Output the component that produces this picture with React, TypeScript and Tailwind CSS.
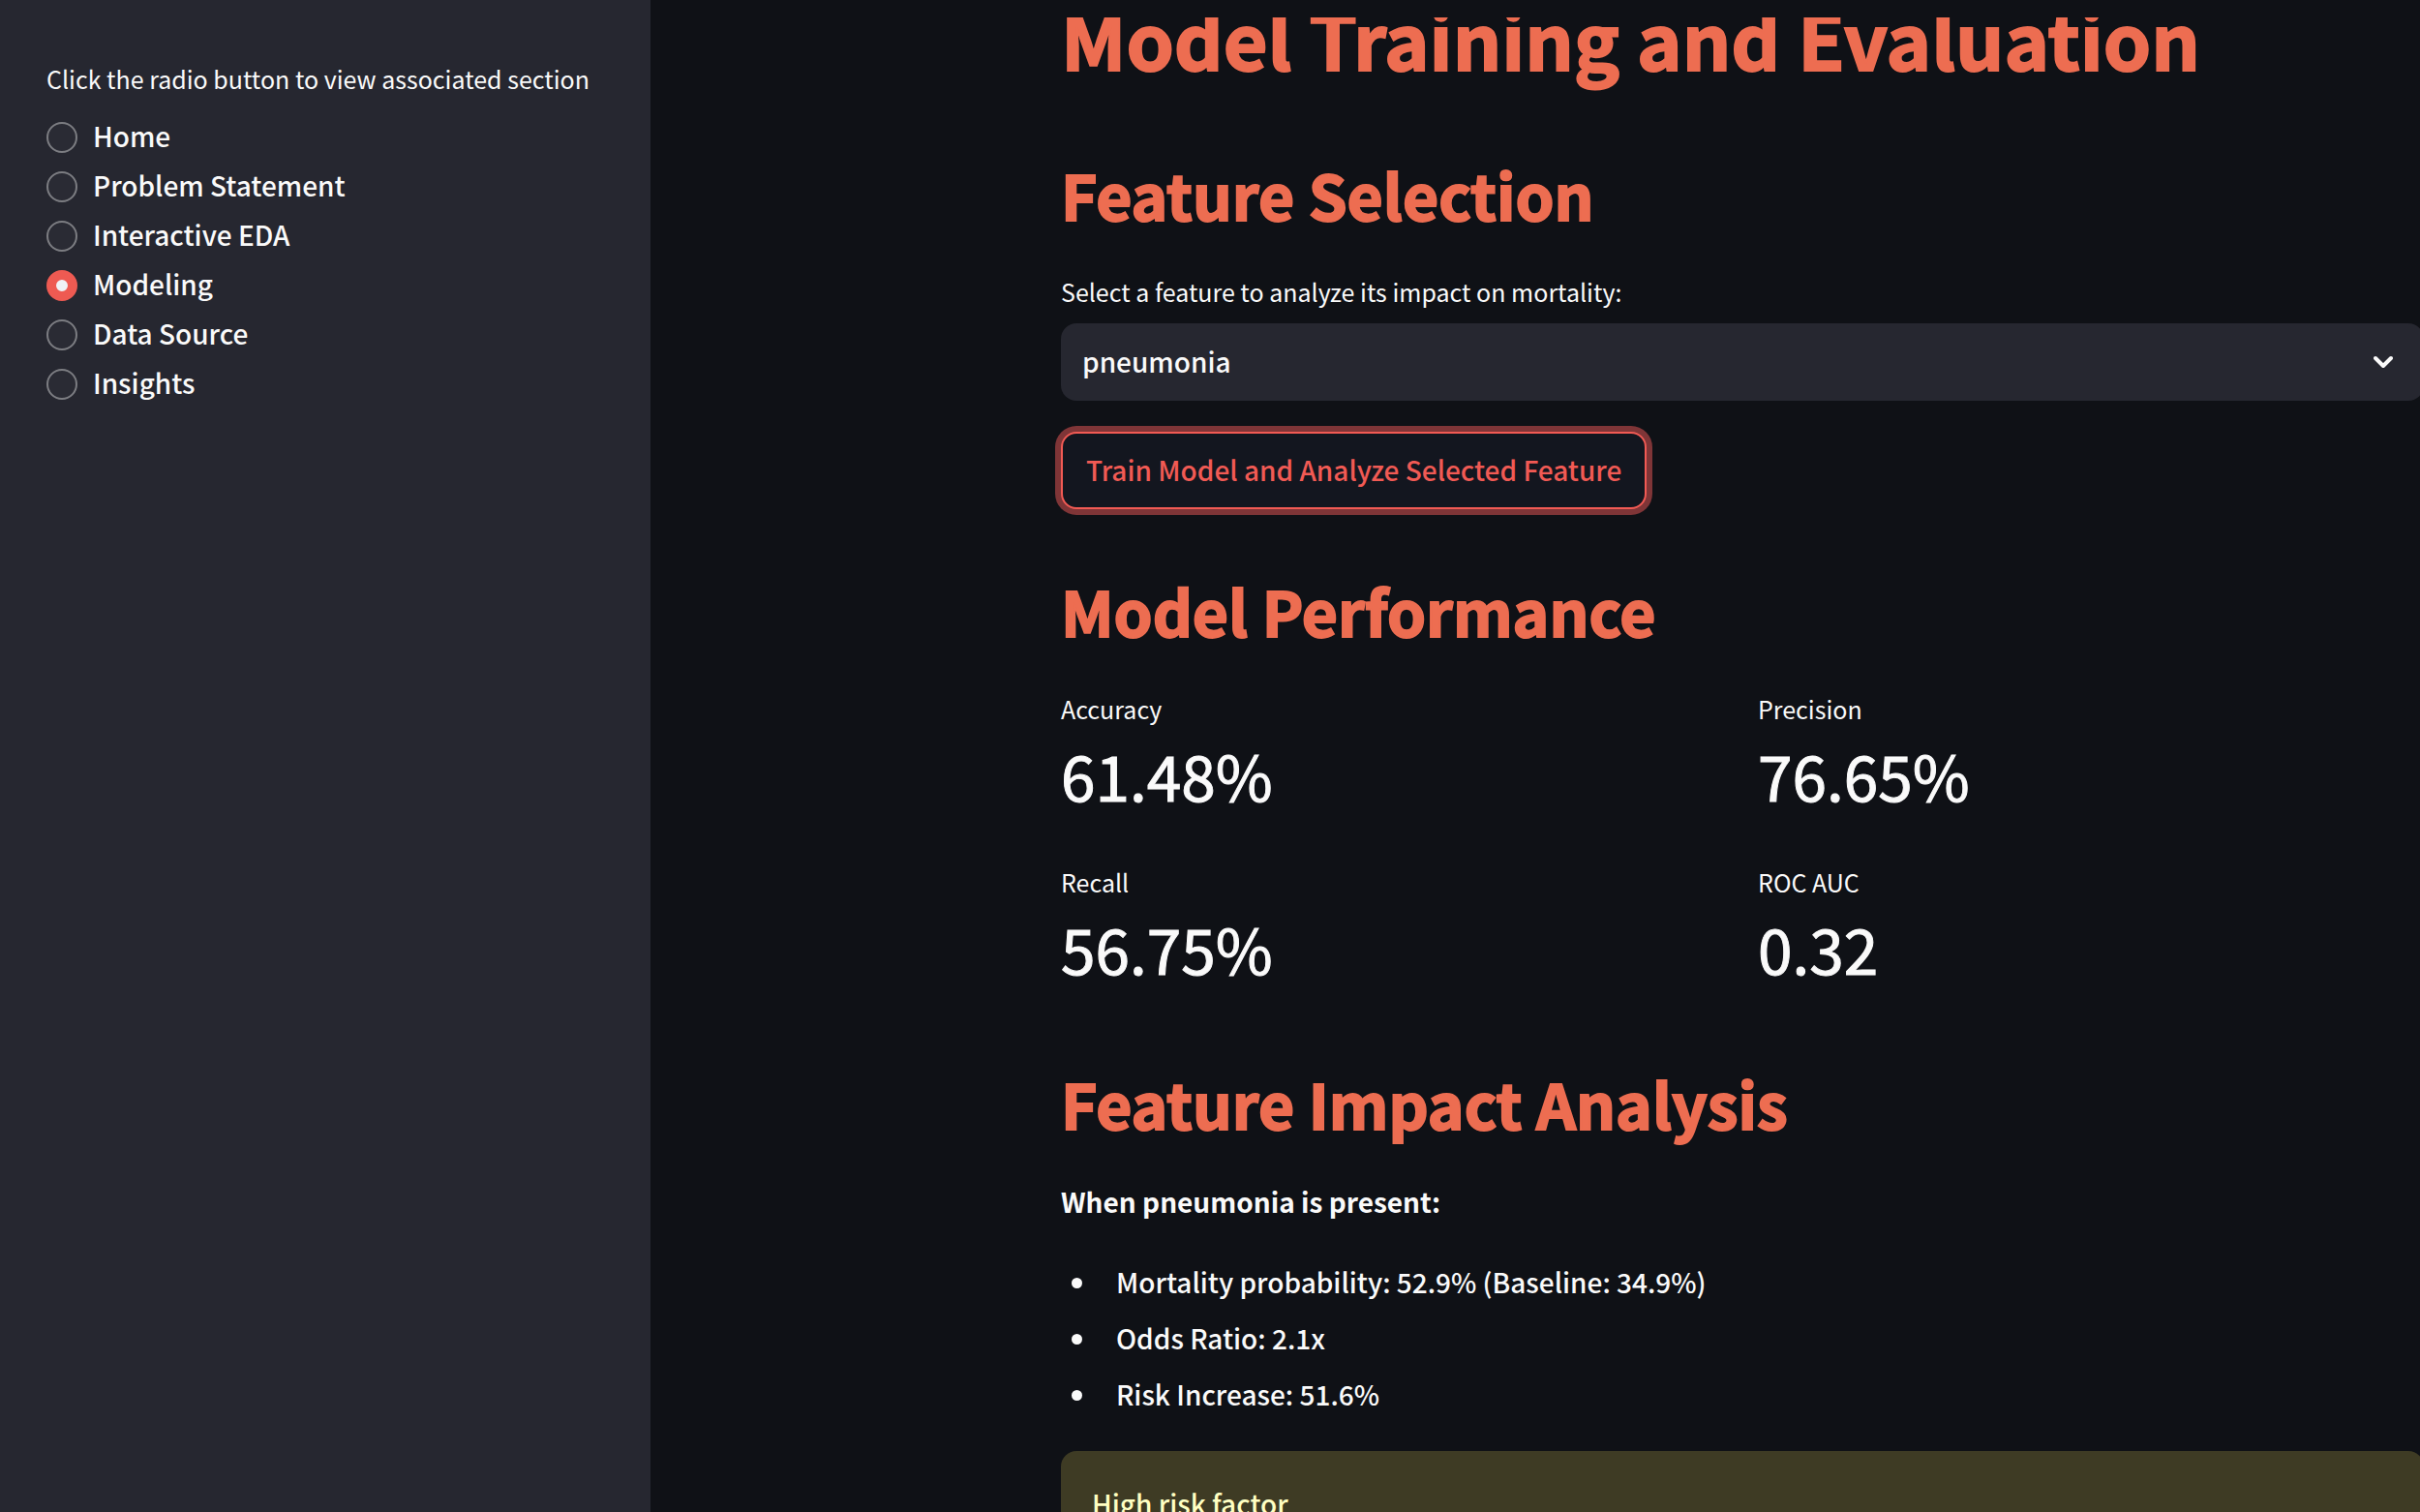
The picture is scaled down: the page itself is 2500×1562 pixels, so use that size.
import { useState } from "react";

const sections = [
  "Home",
  "Problem Statement",
  "Interactive EDA",
  "Modeling",
  "Data Source",
  "Insights",
];

const metrics = [
  { label: "Accuracy", value: "61.48%" },
  { label: "Precision", value: "76.65%" },
  { label: "Recall", value: "56.75%" },
  { label: "ROC AUC", value: "0.32" },
];

const findings = [
  "Mortality probability: 52.9% (Baseline: 34.9%)",
  "Odds Ratio: 2.1x",
  "Risk Increase: 51.6%",
];

function Sidebar() {
  const [active, setActive] = useState("Modeling");
  return (
    <aside className="w-[672px] shrink-0 bg-[#262730] px-12 pt-[61px]">
      <fieldset>
        <legend className="text-[25px] leading-[40px] font-normal">
          Click the radio button to view associated section
        </legend>
        <div className="mt-[25px] flex flex-col gap-[19px]">
          {sections.map((name) => (
            <label key={name} className="flex h-8 cursor-pointer items-center gap-4">
              <input
                type="radio"
                name="section"
                value={name}
                checked={active === name}
                onChange={() => setActive(name)}
                className="size-8 shrink-0 appearance-none rounded-full border-2 border-[#7c7d82] bg-[#2a2b34] outline-none checked:border-[10px] checked:border-[#ee5a52] checked:bg-[#f0f2f6]"
              />
              <span className="pb-1 text-[28px] leading-[46px]">{name}</span>
            </label>
          ))}
        </div>
      </fieldset>
    </aside>
  );
}

function SectionHeading({ children }: { children: string }) {
  return (
    <h2 className="text-[64px] leading-[86px] font-bold text-[#ed6d51] [-webkit-text-stroke:2px_#ed6d51]">
      {children}
    </h2>
  );
}

export default function App() {
  const [feature, setFeature] = useState("pneumonia");
  return (
    <div className="flex h-screen overflow-hidden bg-[#0f1116] font-['Noto_Sans_CJK_SC','Noto_Sans',sans-serif] font-medium text-[#fafafa]">
      <Sidebar />
      <main className="min-w-0 flex-1 overflow-hidden pt-[18px]">
        <div className="-mr-1 overflow-hidden pl-[424px]">
          <h1 className="-mt-8 text-[79px] leading-[106px] font-bold whitespace-nowrap text-[#ed6d51] [-webkit-text-stroke:2px_#ed6d51]">
            Model Training and Evaluation
          </h1>

          <section className="mt-[65px]">
            <SectionHeading>Feature Selection</SectionHeading>
            <label
              htmlFor="feature"
              className="mt-[38px] block text-[25px] leading-[40px] font-normal"
            >
              Select a feature to analyze its impact on mortality:
            </label>
            <div className="relative mt-[13px]">
              <select
                id="feature"
                value={feature}
                onChange={(e) => setFeature(e.target.value)}
                className="block h-20 w-full appearance-none rounded-2xl bg-[#262730] pr-20 pb-0.5 pl-[22px] text-[28px] outline-none"
              >
                <option value="pneumonia">pneumonia</option>
              </select>
              <svg
                viewBox="0 0 20 14"
                fill="none"
                stroke="currentColor"
                strokeWidth="4"
                strokeLinecap="round"
                strokeLinejoin="round"
                className="pointer-events-none absolute top-[33px] right-8 h-[14px] w-5"
                aria-hidden="true"
              >
                <path d="M2 3l8 8 8-8" />
              </svg>
            </div>
            <button
              type="button"
              className="mt-8 block h-20 rounded-2xl border-2 border-[#f15a54] bg-[#13161f] px-6 pb-0.5 text-[28px] whitespace-nowrap text-[#f15a54] ring-6 ring-[#7f3537]"
            >
              Train Model and Analyze Selected Feature
            </button>
          </section>

          <section className="mt-[61px]">
            <SectionHeading>Model Performance</SectionHeading>
            <dl className="mt-[39px] grid grid-cols-2 gap-x-8 gap-y-12 font-normal">
              {metrics.map((m) => (
                <div key={m.label}>
                  <dt className="text-[25px] leading-[40px]">{m.label}</dt>
                  <dd className="mt-[5px] text-[64px] leading-[86px] [-webkit-text-stroke:1px_#fafafa]">
                    {m.value}
                  </dd>
                </div>
              ))}
            </dl>
          </section>

          <section className="mt-[74px]">
            <SectionHeading>Feature Impact Analysis</SectionHeading>
            <p className="mt-[34px] text-[28px] leading-[50px] font-bold">
              When pneumonia is present:
            </p>
            <ul className="mt-[29px] list-disc">
              {findings.map((f) => (
                <li key={f} className="ml-[39px] pl-[18px] text-[28px] leading-[58px]">
                  {f}
                </li>
              ))}
            </ul>
            <div
              role="alert"
              className="mt-[30px] rounded-2xl bg-[#3e3b24] px-8 py-[29px] text-[28px] leading-[50px] text-[#ffffc2]"
            >
              High risk factor
            </div>
          </section>
        </div>
      </main>
    </div>
  );
}
